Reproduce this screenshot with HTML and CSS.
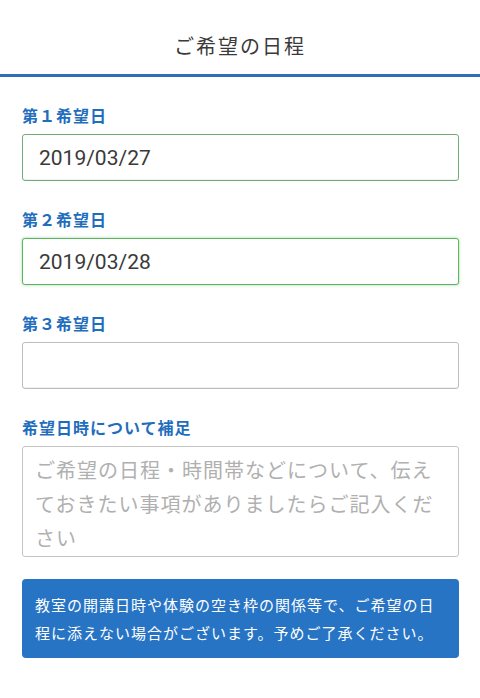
FILE: index.html
```html
<!DOCTYPE html>
<html lang="ja">
<head>
<meta charset="utf-8">
<link rel="stylesheet" href="styles.css">
</head>
<body>
<header class="header"><h1 class="title">ご希望の日程</h1></header>
<form class="form">
  <div class="field">
    <label class="label">第１希望日</label>
    <input class="input input-ok" type="text" value="2019/03/27">
  </div>
  <div class="field">
    <label class="label">第２希望日</label>
    <input class="input input-focus" type="text" value="2019/03/28">
  </div>
  <div class="field">
    <label class="label">第３希望日</label>
    <input class="input" type="text" value="">
  </div>
  <div class="field">
    <label class="label">希望日時について補足</label>
    <textarea class="textarea" placeholder="ご希望の日程・時間帯などについて、伝えておきたい事項がありましたらご記入ください"></textarea>
  </div>
  <div class="notice">教室の開講日時や体験の空き枠の関係等で、ご希望の日程に添えない場合がございます。予めご了承ください。</div>
</form>
</body>
</html>
```
FILE: styles.css
```css
html, body {
  margin: 0;
  padding: 0;
  background: #fff;
  font-family: "Noto Sans CJK JP", "Noto Sans", sans-serif;
  color: #333;
}
.header {
  height: 74px;
  border-bottom: 3px solid #2f6fb4;
  box-sizing: content-box;
}
.title {
  margin: 0;
  padding-top: 28px;
  line-height: 36px;
  font-size: 20px;
  font-weight: 400;
  letter-spacing: 2px;
  text-align: center;
  color: #3a3a3a;
}
.form {
  padding: 28px 21px 0 22px;
  display: flex;
  flex-direction: column;
  gap: 28px;
}
.field {
  display: flex;
  flex-direction: column;
  gap: 9px;
}
.label {
  font-size: 16px;
  line-height: 20px;
  font-weight: 700;
  letter-spacing: 1px;
  color: #1f6dbd;
}
.input {
  box-sizing: border-box;
  height: 47px;
  margin: 0;
  padding: 0 16px;
  border: 1px solid #bdbdbd;
  border-radius: 3px;
  font-family: Roboto, "Noto Sans", sans-serif;
  font-size: 21px;
  color: #3a3a3a;
  background: #fff;
  outline: none;
  box-shadow: inset 0 -1px 0 rgba(0,0,0,0.06);
}
.input-ok {
  border-color: #6fae72;
}
.input-focus {
  border-color: #5bb65f;
  box-shadow: 0 0 3px rgba(76, 175, 80, 0.55);
}
.textarea {
  box-sizing: border-box;
  height: 111px;
  margin: 0;
  padding: 6px 12px;
  border: 1px solid #c4c4c4;
  border-radius: 3px;
  font-family: "Noto Sans CJK JP", sans-serif;
  font-size: 20px;
  line-height: 34px;
  letter-spacing: 1px;
  resize: none;
  outline: none;
  overflow: hidden;
}
.textarea::placeholder {
  color: #b0b0b0;
}
.notice {
  margin-top: -6px;
  background: #2774c5;
  border-radius: 4px;
  padding: 12px 13px 11px;
  color: #fff;
  font-size: 15px;
  line-height: 28px;
  letter-spacing: 1px;
}
```
